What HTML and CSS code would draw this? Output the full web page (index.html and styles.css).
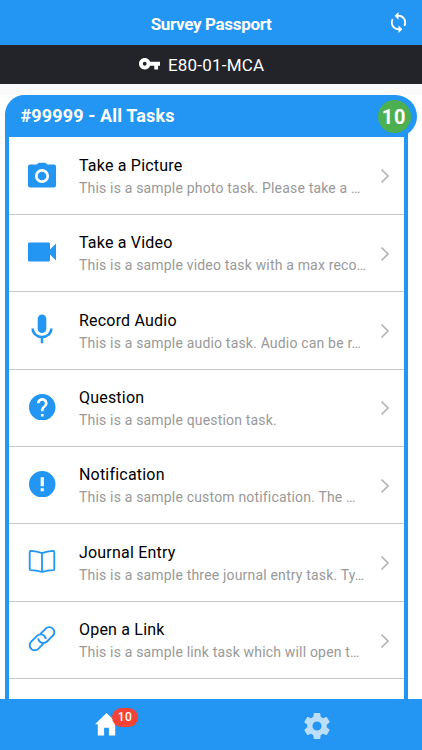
FILE: index.html
```html
<!DOCTYPE html>
<html lang="en">
<head>
<meta charset="utf-8">
<title>Survey Passport</title>
<link rel="stylesheet" href="styles.css">
</head>
<body>
<div class="app">
  <header class="topbar">
    <h1 class="app-title">Survey Passport</h1>
    <svg class="sync" viewBox="0 0 24 24"><path d="M12 4V1L8 5l4 4V6c3.31 0 6 2.69 6 6 0 1.01-.25 1.97-.7 2.8l1.46 1.46C19.54 15.03 20 13.57 20 12c0-4.42-3.58-8-8-8zm0 14c-3.31 0-6-2.69-6-6 0-1.01.25-1.97.7-2.8L5.24 7.74C4.46 8.97 4 10.43 4 12c0 4.42 3.58 8 8 8v3l4-4-4-4v3z"/></svg>
  </header>
  <div class="codebar">
    <svg class="key" viewBox="1 6 22 12"><path d="M12.65 10C11.83 7.67 9.61 6 7 6c-3.31 0-6 2.69-6 6s2.69 6 6 6c2.61 0 4.83-1.67 5.65-4H17v4h4v-4h2v-4H12.65zM7 14c-1.1 0-2-.9-2-2s.9-2 2-2 2 .9 2 2-.9 2-2 2z"/></svg>
    <span class="code">E80-01-MCA</span>
  </div>
  <main class="content">
    <div class="card-head"><h2 class="card-title">#99999 - All Tasks</h2><span class="count">10</span></div>
    <ul class="tasks">
      <li class="task">
        <svg class="icon" viewBox="0 0 30 30"><path d="M3 4.500h6.800l1.200-1.200q.5-.5 1-.5h6q.5 0 1 .5l1.200 1.200H27q2 0 2 2V25.500q0 2-2 2H3q-2 0-2-2V6.500q0-2 2-2z"/><circle cx="15" cy="16" r="5.700" class="ring"/></svg>
        <div class="text"><h3 class="name">Take a Picture</h3><p class="desc">This is a sample photo task. Please take a …</p></div>
        <svg class="chevron" viewBox="0 0 10 16"><path d="M1.500 1.500 8 8l-6.500 6.500"/></svg>
      </li>
      <li class="task">
        <svg class="icon" viewBox="0 0 30 30"><path d="M2.300 5.500h19.400q1.300 0 1.300 1.300v5.800l6-6v16.800l-6-6v5.800q0 1.300-1.300 1.300H2.300Q1 24.500 1 23.200V6.800q0-1.300 1.300-1.300z"/></svg>
        <div class="text"><h3 class="name">Take a Video</h3><p class="desc">This is a sample video task with a max reco…</p></div>
        <svg class="chevron" viewBox="0 0 10 16"><path d="M1.500 1.500 8 8l-6.500 6.500"/></svg>
      </li>
      <li class="task">
        <svg class="icon" viewBox="0 0 30 30"><rect x="10.700" y=".5" width="8.600" height="18.500" rx="4.300"/><path class="mic" d="M5.700 14.500c0 5 4 8.600 9.300 8.600s9.300-3.600 9.300-8.600M15 23v6.200"/></svg>
        <div class="text"><h3 class="name">Record Audio</h3><p class="desc">This is a sample audio task. Audio can be r…</p></div>
        <svg class="chevron" viewBox="0 0 10 16"><path d="M1.500 1.500 8 8l-6.500 6.500"/></svg>
      </li>
      <li class="task">
        <svg class="icon disc" viewBox="2 2 20 20"><path d="M12 2C6.480 2 2 6.480 2 12s4.480 10 10 10 10-4.480 10-10S17.520 2 12 2zm1 17h-2v-2h2v2zm2.070-7.750l-.9.920C13.450 12.900 13 13.500 13 15h-2v-.5c0-1.100.45-2.100 1.170-2.830l1.240-1.260c.37-.36.590-.86.590-1.410 0-1.100-.9-2-2-2s-2 .9-2 2H8c0-2.210 1.790-4 4-4s4 1.790 4 4c0 .88-.36 1.680-.93 2.250z"/></svg>
        <div class="text"><h3 class="name">Question</h3><p class="desc">This is a sample question task.</p></div>
        <svg class="chevron" viewBox="0 0 10 16"><path d="M1.500 1.500 8 8l-6.500 6.500"/></svg>
      </li>
      <li class="task">
        <svg class="icon disc" viewBox="2 2 20 20"><path d="M12 2C6.480 2 2 6.480 2 12s4.480 10 10 10 10-4.480 10-10S17.520 2 12 2zm1.200 15.200h-2.400v-2.200h2.400v2.200zm0-3.600h-2.400V6.800h2.400v6.800z"/></svg>
        <div class="text"><h3 class="name">Notification</h3><p class="desc">This is a sample custom notification. The …</p></div>
        <svg class="chevron" viewBox="0 0 10 16"><path d="M1.500 1.500 8 8l-6.500 6.500"/></svg>
      </li>
      <li class="task">
        <svg class="icon" viewBox="0 0 30 30"><path class="line" d="M15 6.200Q10 4.300 3.800 3.900Q2.700 3.900 2.700 5V21.900Q2.700 23 3.800 23.100Q9.500 23.300 15 25Q20.500 23.300 26.200 23.100Q27.300 23 27.300 21.900V5Q27.300 3.900 26.200 3.900Q20 4.300 15 6.200V24.700"/></svg>
        <div class="text"><h3 class="name">Journal Entry</h3><p class="desc">This is a sample three journal entry task. Ty…</p></div>
        <svg class="chevron" viewBox="0 0 10 16"><path d="M1.500 1.500 8 8l-6.500 6.500"/></svg>
      </li>
      <li class="task">
        <svg class="icon" viewBox="0 0 30 30"><path class="chain" d="M13.200 10.200l5.500-5.600a4.900 4.900 0 0 1 7.100 0a4.900 4.900 0 0 1 0 7.100L20 17.500a5.200 5.200 0 0 1-7.400 0Q11.500 16.300 11.200 14.400M16.800 19.200l-5.500 5.600a4.900 4.900 0 0 1-7.100 0a4.900 4.900 0 0 1 0-7.100L10 11.900a5.200 5.200 0 0 1 7.400 0Q18.500 13.100 18.800 15"/></svg>
        <div class="text"><h3 class="name">Open a Link</h3><p class="desc">This is a sample link task which will open t…</p></div>
        <svg class="chevron" viewBox="0 0 10 16"><path d="M1.500 1.500 8 8l-6.500 6.500"/></svg>
      </li>
    </ul>
  </main>
  <nav class="tabs">
    <div class="tab"><span class="home-wrap"><svg class="home" viewBox="0 0 24 24"><path d="M12 .5 0 12.300h2.900V24h6.600v-8.200h5V24h6.600V12.300H24L19.900 8.200 12 .5z"/></svg><span class="badge">10</span></span></div>
    <div class="tab"><svg class="gear" viewBox="2 2 20 20"><path d="M19.430 12.980c.04-.32.070-.64.070-.98s-.03-.66-.07-.98l2.110-1.650c.19-.15.240-.42.120-.64l-2-3.460c-.12-.22-.39-.3-.61-.22l-2.490 1c-.52-.4-1.080-.73-1.690-.98l-.38-2.650C14.460 2.180 14.250 2 14 2h-4c-.25 0-.46.180-.49.420l-.38 2.650c-.61.250-1.170.590-1.690.980l-2.490-1c-.23-.09-.49 0-.61.220l-2 3.460c-.13.220-.07.490.120.640l2.110 1.650c-.04.320-.07.650-.07.980s.03.660.070.980l-2.110 1.650c-.19.150-.24.420-.12.640l2 3.460c.12.220.39.300.61.220l2.490-1c.52.400 1.080.730 1.690.980l.38 2.650c.03.240.24.420.49.420h4c.25 0 .46-.18.490-.42l.38-2.650c.61-.25 1.170-.59 1.690-.98l2.490 1c.23.090.49 0 .61-.22l2-3.460c.12-.22.070-.49-.12-.64l-2.110-1.650zM12 15.500c-1.930 0-3.500-1.570-3.500-3.500s1.570-3.500 3.500-3.500 3.500 1.570 3.500 3.500-1.570 3.500-3.500 3.500z"/></svg></div>
  </nav>
</div>
</body>
</html>
```
FILE: styles.css
```css
* { box-sizing: border-box; }
body, h1, h2, h3, p, ul { margin: 0; padding: 0; }
body { font-family: Roboto, "Liberation Sans", sans-serif; background: #fff; }
svg { display: block; flex: none; }
.app { width: 422px; height: 750px; display: flex; flex-direction: column; overflow: hidden; }
.topbar { height: 45px; flex: none; background: #2395f3; color: #fff; display: grid; grid-template-columns: 48px 1fr 48px; align-items: center; }
.app-title { grid-column: 2; text-align: center; font-size: 17px; line-height: 24px; font-weight: 700; letter-spacing: -.33px; padding-top: 3px; }
.sync { width: 23px; height: 23px; fill: #fff; justify-self: center; }
.codebar { height: 39.400px; flex: none; background: #232429; color: #fff; display: flex; align-items: center; padding-left: 139px; gap: 8px; }
.key { width: 21px; height: 11.500px; fill: #fff; margin-top: -1px; }
.code { font-size: 17px; line-height: 24px; letter-spacing: .2px; }
.content { flex: 1; min-height: 0; overflow: hidden; padding: 10.600px 0 0 5px; background: linear-gradient(#fafafa 10.600px, #fff 10.600px); }
.card-head { position: relative; z-index: 1; width: 411.500px; height: 42.500px; background: #2395f3; border-radius: 20px 22px 21px 0; display: flex; align-items: center; justify-content: space-between; padding: 0 6px 0 15.500px; }
.card-title { color: #fff; font-size: 18px; line-height: 24px; font-weight: 700; letter-spacing: .14px; }
.count { width: 33px; height: 33px; border-radius: 50%; background: #4caf50; color: #fff; font-size: 20px; font-weight: 700; line-height: 35px; text-align: center; letter-spacing: .7px; }
.tasks { list-style: none; width: 402.500px; height: 700px; margin-top: -10px; border: 4px solid #2395f3; border-top-width: 10px; background: #fff; }
.task { height: 77.400px; border-bottom: 1px solid #c8c8c8; display: flex; align-items: center; padding: 0 14px 0 18px; }
.icon { width: 30px; height: 30px; margin: -2px 22px 0 0; fill: #2395f3; }
.disc { width: 26.500px; height: 26.500px; margin: -2px 23.500px 0 2px; }
.ring { fill: none; stroke: #fff; stroke-width: 2.700; }
.mic { fill: none; stroke: #2395f3; stroke-width: 2.500; }
.line, .chain { fill: none; stroke: #2395f3; stroke-width: 1.800; stroke-linejoin: round; }
.chain { stroke-width: 1.900; }
.text { flex: 1; min-width: 0; white-space: nowrap; padding-top: 2.500px; }
.name { color: #000; font-size: 16px; line-height: 22px; font-weight: 400; letter-spacing: .2px; }
.desc { color: #999; font-size: 14px; line-height: 22px; letter-spacing: .18px; }
.chevron { width: 10px; height: 16px; margin-top: 1px; fill: none; stroke: #b4b4b4; stroke-width: 1.700; }
.tabs { height: 51.500px; flex: none; background: #2395f3; display: flex; }
.tab { flex: 1; display: flex; align-items: center; justify-content: center; padding-top: 4px; }
.home-wrap { position: relative; }
.home { width: 23px; height: 24px; fill: #fff; margin: -4px 0 0 1px; }
.badge { position: absolute; left: 18.500px; top: -8px; width: 26px; height: 19px; border-radius: 10px; background: #f44336; color: #fff; font-size: 12px; font-weight: 500; line-height: 19px; text-align: center; letter-spacing: .5px; }
.gear { width: 26px; height: 26px; fill: #bbdefb; }
```
